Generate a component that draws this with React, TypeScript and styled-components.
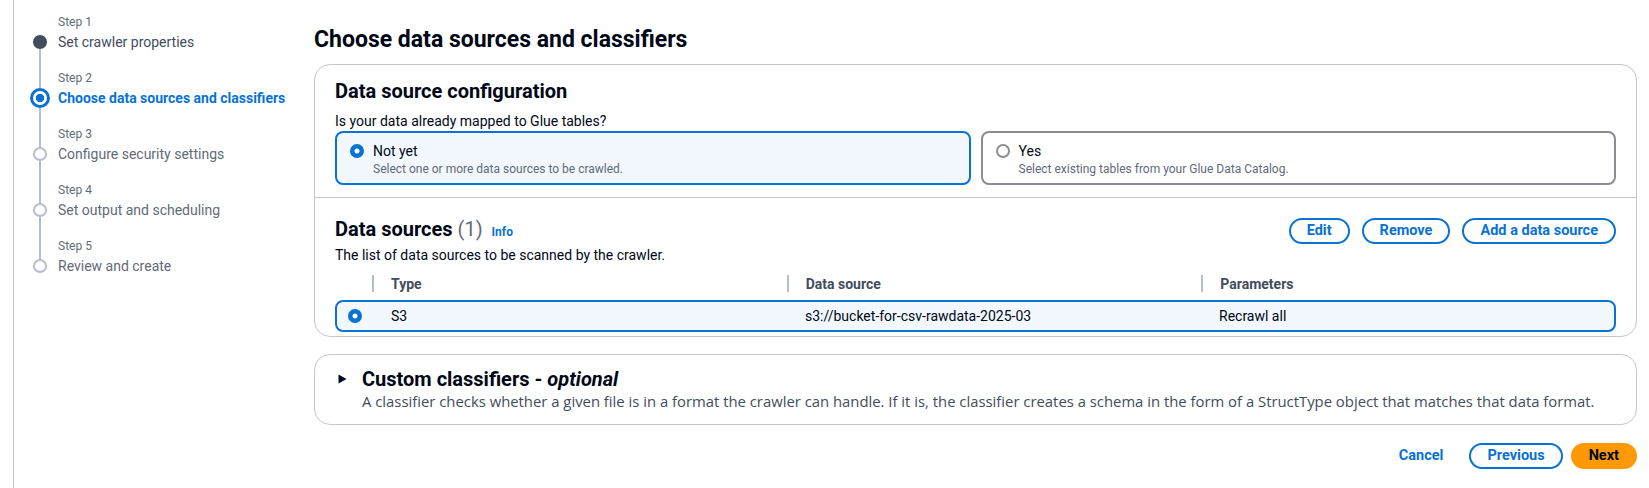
import React from "react";
import styled, { createGlobalStyle, css } from "styled-components";

const Global = createGlobalStyle`
  html, body, #root { margin: 0; padding: 0; height: 100%; }
  body {
    background: #ffffff;
    font-family: Roboto, "Liberation Sans", sans-serif;
    color: #000716;
    font-size: 14px;
  }
  * { box-sizing: border-box; }
`;

const BLUE = "#0972d3";

const Page = styled.div`
  display: flex;
  min-height: 100vh;
  padding-left: 13px;
`;

const Nav = styled.nav`
  width: 301px;
  flex-shrink: 0;
  border-left: 1px solid #c6c6cd;
  padding: 13px 0 0 14px;
`;

const StepItem = styled.div`
  display: grid;
  grid-template-columns: 24px 1fr;
  grid-template-rows: 18px 22px 16px;
  column-gap: 6px;
`;

const RailCell = styled.div`
  display: flex;
  flex-direction: column;
  align-items: center;
`;

const Seg = styled.div<{ $hidden?: boolean }>`
  flex: 1;
  width: 2px;
  background: ${(p) => (p.$hidden ? "transparent" : "#b6bec9")};
`;

type StepState = "done" | "active" | "todo";

const Dot = styled.div<{ $state: StepState }>`
  flex-shrink: 0;
  border-radius: 50%;
  ${(p) =>
    p.$state === "done"
      ? css`
          width: 14px;
          height: 14px;
          background: #414d5c;
        `
      : p.$state === "active"
      ? css`
          width: 20px;
          height: 20px;
          border: 3px solid ${BLUE};
          background: radial-gradient(circle, ${BLUE} 0 4px, #fff 4.5px);
        `
      : css`
          width: 14px;
          height: 14px;
          border: 2px solid #b6bec9;
          background: #fff;
        `}
`;

const StepNum = styled.div`
  font-size: 12px;
  line-height: 18px;
  color: #5f6b7a;
`;

const StepLabel = styled.div<{ $state: StepState }>`
  font-size: 14px;
  line-height: 22px;
  white-space: nowrap;
  color: ${(p) => (p.$state === "active" ? BLUE : p.$state === "done" ? "#414d5c" : "#5f6b7a")};
  font-weight: ${(p) => (p.$state === "active" ? 700 : 400)};
`;

const Main = styled.main`
  flex: 1;
  padding: 26px 12px 0 0;
`;

const H1 = styled.h1`
  margin: 0 0 10px;
  font-size: 23px;
  line-height: 28px;
  font-weight: 700;
`;

const Container = styled.section`
  border: 1px solid #c6c6cd;
  border-radius: 16px;
  background: #fff;
`;

const ConfigSection = styled.div`
  padding: 14px 20px 12px;
  border-bottom: 1px solid #c6c6cd;
`;

const H2 = styled.h2`
  margin: 0;
  font-size: 20px;
  line-height: 24px;
  font-weight: 700;
  display: flex;
  align-items: baseline;
`;

const Question = styled.div`
  margin-top: 8px;
  font-size: 14px;
  line-height: 20px;
`;

const Tiles = styled.div`
  display: grid;
  grid-template-columns: 1fr 1fr;
  gap: 10px;
`;

const Tile = styled.div<{ $selected?: boolean }>`
  height: 54px;
  border-radius: 8px;
  border: 2px solid ${(p) => (p.$selected ? BLUE : "#8c8c94")};
  background: ${(p) => (p.$selected ? "#f2f8fd" : "#fff")};
  padding: 8px 12px 0 13px;
  display: grid;
  grid-template-columns: 14px 1fr;
  grid-template-rows: 20px 16px;
  column-gap: 9px;
  align-items: center;
  align-content: start;
`;

const TileLabel = styled.div`
  font-size: 14px;
  line-height: 20px;
`;

const TileDesc = styled.div`
  grid-column: 2;
  font-size: 12px;
  line-height: 16px;
  color: #5f6b7a;
`;

const SourcesSection = styled.div`
  padding: 19px 20px 4px;
`;

const SourcesHeader = styled.div`
  display: flex;
  align-items: center;
  justify-content: space-between;
`;

const Count = styled.span`
  font-weight: 400;
  color: #5f6b7a;
  margin-left: 5px;
`;

const Info = styled.span`
  font-size: 12px;
  font-weight: 700;
  color: ${BLUE};
  margin-left: 9px;
`;

const Actions = styled.div`
  display: flex;
  gap: 12px;
  align-items: center;
`;

type Variant = "normal" | "primary" | "link";

const Button = styled.button<{ $variant?: Variant }>`
  height: 26px;
  padding: 0 16px;
  border-radius: 20px;
  font-family: inherit;
  font-size: 14.5px;
  font-weight: 700;
  line-height: 22px;
  cursor: pointer;
  border: 2px solid
    ${(p) => (p.$variant === "primary" ? "#ff9900" : p.$variant === "link" ? "transparent" : BLUE)};
  background: ${(p) => (p.$variant === "primary" ? "#ff9900" : "transparent")};
  color: ${(p) => (p.$variant === "primary" ? "#000716" : BLUE)};
`;

const Desc = styled.div`
  margin-top: 1px;
  font-size: 14px;
  line-height: 20px;
  color: #000716;
`;

const HeadRow = styled.div`
  display: grid;
  grid-template-columns: 37px 1fr 1fr 1fr;
  height: 33px;
  margin-top: 2px;
  align-items: center;
`;

const HeadCell = styled.div`
  display: flex;
  align-items: center;
  font-weight: 700;
  font-size: 14px;
  color: #414d5c;
`;

const Sep = styled.span`
  width: 2px;
  height: 17px;
  background: #b6bec9;
  margin-right: 17px;
`;

const DataRow = styled.div<{ $selected?: boolean }>`
  display: grid;
  grid-template-columns: 35px 1fr 1fr 1fr;
  height: 32px;
  align-items: center;
  border: 2px solid ${(p) => (p.$selected ? BLUE : "transparent")};
  border-radius: 8px;
  background: ${(p) => (p.$selected ? "#f2f8fd" : "#fff")};
`;

const Cell = styled.div`
  padding-left: 19px;
  font-size: 14px;
  color: #000716;
`;

const RadioCell = styled.div`
  display: flex;
  justify-content: center;
`;

const ClassifierBox = styled(Container)`
  margin-top: 17px;
  padding: 12px 20px 13px 23px;
  display: grid;
  grid-template-columns: 9px 1fr;
  column-gap: 15px;
  align-items: center;
`;

const ClassifierTitle = styled.div`
  font-size: 20px;
  line-height: 24px;
  font-weight: 700;
  em { font-style: italic; }
`;

const ClassifierDesc = styled.div`
  grid-column: 2;
  font-family: "Open Sans", Roboto, sans-serif;
  font-size: 14.85px;
  line-height: 20px;
  color: #414d5c;
  white-space: nowrap;
`;

const Footer = styled.div`
  display: flex;
  justify-content: flex-end;
  align-items: center;
  gap: 8px;
  margin-top: 18px;
`;

const Radio = ({ checked }: { checked?: boolean }) =>
  checked ? (
    <svg width="14" height="14" viewBox="0 0 14 14">
      <circle cx="7" cy="7" r="4.75" fill="#fff" stroke={BLUE} strokeWidth="4.5" />
    </svg>
  ) : (
    <svg width="14" height="14" viewBox="0 0 14 14">
      <circle cx="7" cy="7" r="6" fill="#fff" stroke="#8c8c94" strokeWidth="2" />
    </svg>
  );

const Caret = () => (
  <svg width="9" height="10" viewBox="0 0 9 10">
    <polygon points="0.5,0.5 8.5,5 0.5,9.5" fill="#000716" />
  </svg>
);

const steps: { n: number; label: string; state: StepState }[] = [
  { n: 1, label: "Set crawler properties", state: "done" },
  { n: 2, label: "Choose data sources and classifiers", state: "active" },
  { n: 3, label: "Configure security settings", state: "todo" },
  { n: 4, label: "Set output and scheduling", state: "todo" },
  { n: 5, label: "Review and create", state: "todo" },
];

export default function App() {
  return (
    <>
      <Global />
      <Page>
        <Nav>
          {steps.map((s, i) => (
            <StepItem key={s.n}>
              <RailCell>
                <Seg $hidden={i === 0} />
              </RailCell>
              <StepNum>Step {s.n}</StepNum>
              <RailCell>
                <Seg $hidden={i === 0} />
                <Dot $state={s.state} />
                <Seg $hidden={i === steps.length - 1} />
              </RailCell>
              <StepLabel $state={s.state}>{s.label}</StepLabel>
              <RailCell>
                <Seg $hidden={i === steps.length - 1} />
              </RailCell>
            </StepItem>
          ))}
        </Nav>
        <Main>
          <H1>Choose data sources and classifiers</H1>
          <Container>
            <ConfigSection>
              <H2>Data source configuration</H2>
              <Question>Is your data already mapped to Glue tables?</Question>
              <Tiles>
                <Tile $selected>
                  <Radio checked />
                  <TileLabel>Not yet</TileLabel>
                  <TileDesc>Select one or more data sources to be crawled.</TileDesc>
                </Tile>
                <Tile>
                  <Radio />
                  <TileLabel>Yes</TileLabel>
                  <TileDesc>Select existing tables from your Glue Data Catalog.</TileDesc>
                </Tile>
              </Tiles>
            </ConfigSection>
            <SourcesSection>
              <SourcesHeader>
                <H2>
                  Data sources<Count>(1)</Count>
                  <Info>Info</Info>
                </H2>
                <Actions>
                  <Button>Edit</Button>
                  <Button>Remove</Button>
                  <Button>Add a data source</Button>
                </Actions>
              </SourcesHeader>
              <Desc>The list of data sources to be scanned by the crawler.</Desc>
              <HeadRow>
                <div />
                <HeadCell>
                  <Sep />
                  Type
                </HeadCell>
                <HeadCell>
                  <Sep />
                  Data source
                </HeadCell>
                <HeadCell>
                  <Sep />
                  Parameters
                </HeadCell>
              </HeadRow>
              <DataRow $selected>
                <RadioCell>
                  <Radio checked />
                </RadioCell>
                <Cell>S3</Cell>
                <Cell>s3://bucket-for-csv-rawdata-2025-03</Cell>
                <Cell>Recrawl all</Cell>
              </DataRow>
            </SourcesSection>
          </Container>
          <ClassifierBox>
            <Caret />
            <ClassifierTitle>
              Custom classifiers - <em>optional</em>
            </ClassifierTitle>
            <ClassifierDesc>
              A classifier checks whether a given file is in a format the crawler can handle. If it is, the
              classifier creates a schema in the form of a StructType object that matches that data format.
            </ClassifierDesc>
          </ClassifierBox>
          <Footer>
            <Button $variant="link">Cancel</Button>
            <Button>Previous</Button>
            <Button $variant="primary">Next</Button>
          </Footer>
        </Main>
      </Page>
    </>
  );
}
